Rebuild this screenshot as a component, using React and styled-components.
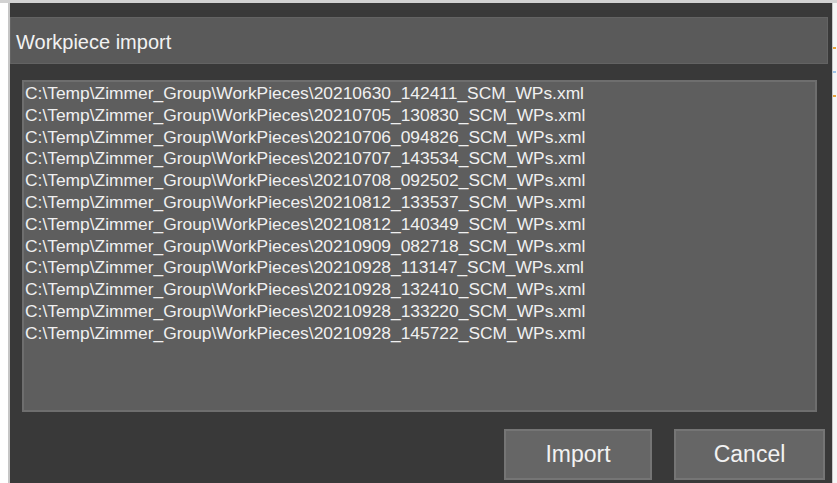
import React from 'react';
import styled, { createGlobalStyle } from 'styled-components';

const GlobalStyle = createGlobalStyle`
  html, body {
    margin: 0;
    padding: 0;
    background: #fff;
    overflow: hidden;
  }
  body {
    font-family: 'Liberation Sans', Arial, sans-serif;
  }
`;

const Screen = styled.div`
  width: 837px;
  height: 483px;
  display: flex;
  flex-direction: column;
  background: #fff;
`;

const TopStrip = styled.div`
  height: 3px;
  background: #d2d2d2;
  flex-shrink: 0;
`;

const Desk = styled.div`
  flex: 1;
  display: flex;
  padding-left: 8px;
  min-height: 0;
`;

const Window = styled.div`
  width: 820px;
  display: flex;
  flex-direction: column;
  background: #393939;
  border-left: 2px solid #c6c6c6;
  border-right: 1px solid #cacaca;
  padding: 14px 2px 0 0;
`;

const SideStrip = styled.div`
  flex: 1;
  display: flex;
  flex-direction: column;
  background: #f6f6f6;
  padding-top: 44px;
  gap: 22px;
`;

const Tick = styled.div`
  height: 2px;
  width: 3px;
  background: ${(props) => props.color};
`;

const TitleBar = styled.div`
  height: 47px;
  box-sizing: border-box;
  display: flex;
  align-items: center;
  padding: 4px 0 0 5px;
  background: #5a5a5a;
  border: 1px solid #636363;
  margin-right: 2px;
  color: #f2f2f2;
  font-size: 20px;
`;

const ListBox = styled.div`
  height: 327px;
  margin: 16px 13px 0 12px;
  background: #5e5e5e;
  border: 2px solid #6e6e6e;
  padding: 1px 0 0 1px;
`;

const FileRow = styled.div`
  font-size: 17.4px;
  line-height: 21.8px;
  color: #f0f0f0;
  white-space: nowrap;
`;

const ButtonRow = styled.div`
  display: flex;
  justify-content: flex-end;
  gap: 22px;
  margin-top: 17px;
  padding-right: 5px;
`;

const Button = styled.button`
  width: ${(props) => props.w}px;
  height: 51px;
  background: #666;
  border: 2px solid #757575;
  color: #f2f2f2;
  font-family: 'Liberation Sans', Arial, sans-serif;
  font-size: 23px;
  padding: 0;
  cursor: pointer;
`;

const files = [
  '20210630_142411',
  '20210705_130830',
  '20210706_094826',
  '20210707_143534',
  '20210708_092502',
  '20210812_133537',
  '20210812_140349',
  '20210909_082718',
  '20210928_113147',
  '20210928_132410',
  '20210928_133220',
  '20210928_145722',
];

const App = () => (
  <>
    <GlobalStyle />
    <Screen>
      <TopStrip />
      <Desk>
        <Window>
          <TitleBar>Workpiece import</TitleBar>
          <ListBox>
            {files.map((stamp) => (
              <FileRow key={stamp}>
                {`C:\\Temp\\Zimmer_Group\\WorkPieces\\${stamp}_SCM_WPs.xml`}
              </FileRow>
            ))}
          </ListBox>
          <ButtonRow>
            <Button w={148}>Import</Button>
            <Button w={151}>Cancel</Button>
          </ButtonRow>
        </Window>
        <SideStrip>
          <Tick color="#e8a33c" />
          <Tick color="#9fc4e8" />
          <Tick color="#e8a33c" />
        </SideStrip>
      </Desk>
    </Screen>
  </>
);

export default App;
